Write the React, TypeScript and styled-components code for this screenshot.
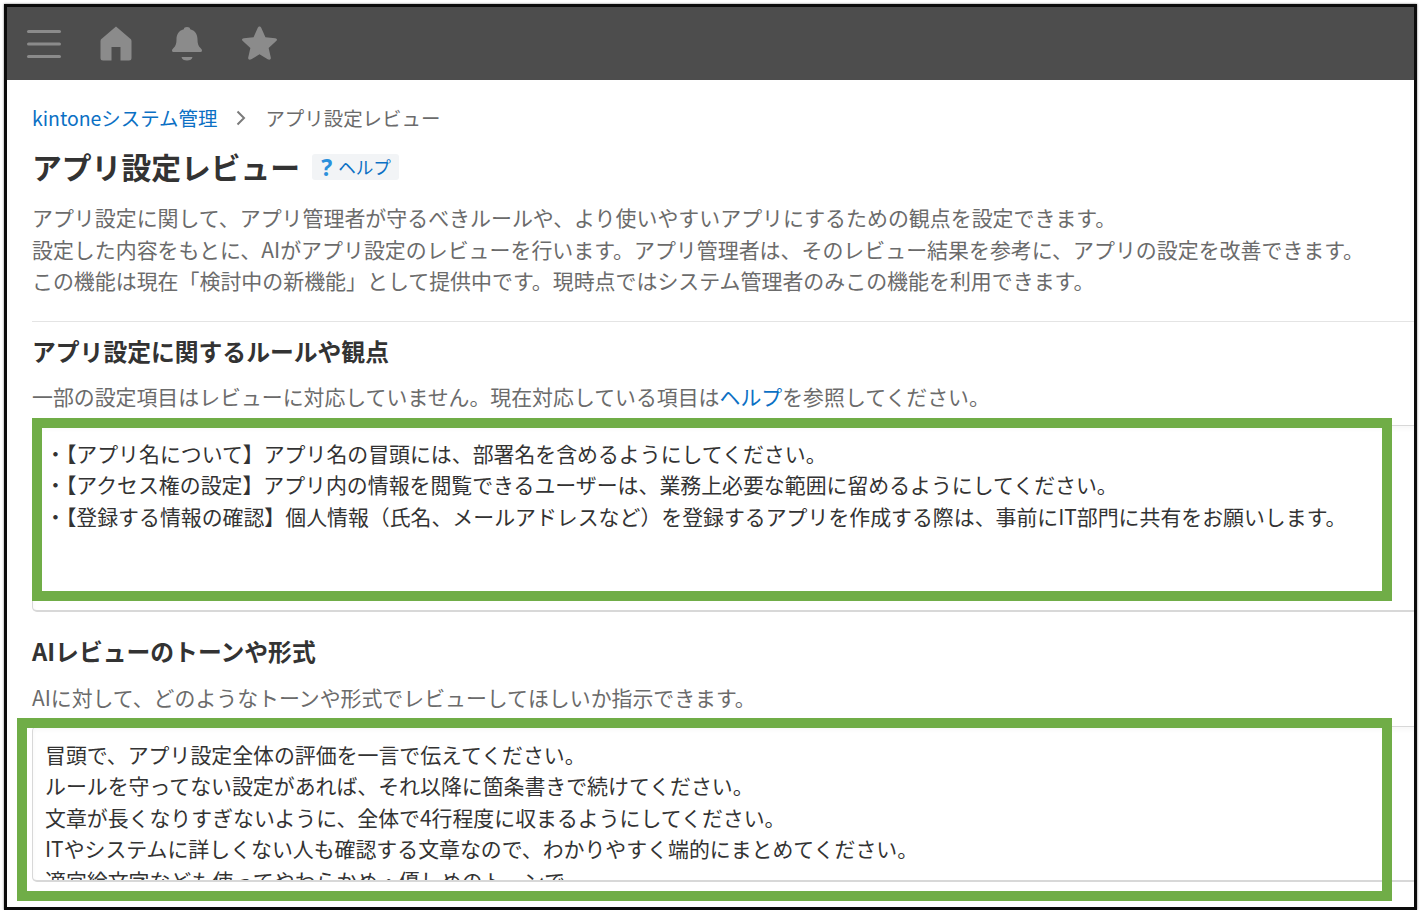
import * as React from "react";
import styled, { createGlobalStyle } from "styled-components";

const GlobalStyle = createGlobalStyle`
  html, body {
    margin: 0;
    padding: 0;
    background: #fff;
  }
  body {
    font-family: "Noto Sans CJK JP", "Noto Sans", sans-serif;
  }
`;

const Frame = styled.div`
  box-sizing: border-box;
  width: 1413px;
  height: 906px;
  margin: 4px 0 0 4px;
  border: 3px solid #0c0c0c;
  box-shadow: 0 0 2px #777;
  overflow: hidden;
  background: #fff;
`;

const Header = styled.header`
  display: flex;
  align-items: center;
  height: 73px;
  padding-left: 1px;
  background: #4d4d4d;
`;

const HeaderIcon = styled.div`
  display: flex;
  align-items: center;
  justify-content: center;
  width: 71.8px;
  height: 73px;

  svg {
    display: block;
    fill: #8b8b8b;
  }
`;

const Content = styled.main`
  padding: 0 0 0 25px;
`;

const Breadcrumb = styled.nav`
  display: flex;
  align-items: center;
  height: 32px;
  margin-top: 22px;
  font-size: 19.45px;
  line-height: 32px;
  color: #6b6b6b;
`;

const CrumbLink = styled.a`
  color: #0b70c4;
`;

const CrumbArrow = styled.svg`
  margin: 0 19px;
  fill: none;
  stroke: #7b7b7b;
  stroke-width: 2;
`;

const TitleRow = styled.div`
  display: flex;
  align-items: center;
  height: 42px;
  margin-top: 11px;
`;

const Title = styled.h1`
  margin: 0;
  font-size: 29.8px;
  line-height: 42px;
  font-weight: 700;
  color: #333;
`;

const HelpBadge = styled.a`
  display: flex;
  align-items: center;
  gap: 6px;
  height: 26px;
  margin: 2px 0 0 12px;
  padding: 0 8px 0 9px;
  border-radius: 3px;
  background: #f2f4f6;
  color: #0b70c4;
  font-size: 17.6px;
  line-height: 26px;
`;

const HelpMark = styled.span`
  color: #2b90dc;
  font-size: 23px;
  font-weight: 700;
  font-family: "Noto Sans", sans-serif;
`;

const Description = styled.p`
  margin: 15px 0 0;
  padding-bottom: 24px;
  border-bottom: 1px solid #e4e4e4;
  font-size: 20.95px;
  line-height: 31.5px;
  color: #6b6b6b;
`;

const SectionTitle = styled.h2<{ $top: number }>`
  margin: ${(p) => p.$top}px 0 0;
  font-size: 23.8px;
  line-height: 34px;
  font-weight: 700;
  color: #333;
`;

const Note = styled.p<{ $top: number }>`
  margin: ${(p) => p.$top}px 0 0;
  font-size: 20.9px;
  line-height: 32px;
  color: #6b6b6b;

  a {
    color: #0b70c4;
  }
`;

const FieldWrap = styled.div`
  position: relative;
  margin-top: 13px;
`;

const TextBox = styled.div<{ $height: number }>`
  box-sizing: border-box;
  height: ${(p) => p.$height}px;
  padding: 12px 12px 0;
  border: 1px solid #d8d8d8;
  border-right: none;
  border-bottom-width: 2px;
  border-radius: 5px 0 0 5px;
  box-shadow: inset 0 3px 4px rgba(0, 0, 0, 0.03);
  overflow: hidden;
  font-size: 20.9px;
  line-height: 31.5px;
  color: #333;
  white-space: nowrap;
`;

const Highlight = styled.div<{ $left: number; $top: number; $width: number; $height: number }>`
  position: absolute;
  box-sizing: border-box;
  left: ${(p) => p.$left}px;
  top: ${(p) => p.$top}px;
  width: ${(p) => p.$width}px;
  height: ${(p) => p.$height}px;
  border: 10px solid #70ad47;
  pointer-events: none;
`;

const rules = [
  "・【アプリ名について】アプリ名の冒頭には、部署名を含めるようにしてください。",
  "・【アクセス権の設定】アプリ内の情報を閲覧できるユーザーは、業務上必要な範囲に留めるようにしてください。",
  "・【登録する情報の確認】個人情報（氏名、メールアドレスなど）を登録するアプリを作成する際は、事前にIT部門に共有をお願いします。",
];

const tone = [
  "冒頭で、アプリ設定全体の評価を一言で伝えてください。",
  "ルールを守ってない設定があれば、それ以降に箇条書きで続けてください。",
  "文章が長くなりすぎないように、全体で4行程度に収まるようにしてください。",
  "ITやシステムに詳しくない人も確認する文章なので、わかりやすく端的にまとめてください。",
  "適宜絵文字なども使ってやわらかめ・優しめのトーンで",
];

export default function App() {
  return (
    <>
      <GlobalStyle />
      <Frame>
        <Header>
          <HeaderIcon>
            <svg width="36" height="30" viewBox="0 0 36 30">
              <rect x="1" y="1" width="34" height="3" rx="1.5" />
              <rect x="1" y="13.5" width="34" height="3" rx="1.5" />
              <rect x="1" y="26" width="34" height="3" rx="1.5" />
            </svg>
          </HeaderIcon>
          <HeaderIcon>
            <svg width="32" height="35" viewBox="0 0 32 35">
              <path d="M16 .5 30 12.500a3 3 0 0 1 1.500 2.600V32a2.500 2.500 0 0 1-2.500 2.500h-8.500V21h-9v13.500H3A2.500 2.500 0 0 1 .5 32V15.100A3 3 0 0 1 2 12.500Z" />
            </svg>
          </HeaderIcon>
          <HeaderIcon>
            <svg width="32" height="35" viewBox="0 0 32 35">
              <path d="M16 1c2 0 3 .9 3.200 2.200C24.800 4.600 26.500 9 26.500 13.500c0 4 .8 6.500 3 8.500.9.900 1.500 1.700 1.500 2.500 0 1-.8 1.500-2 1.500H3c-1.200 0-2-.5-2-1.500 0-.8.6-1.600 1.500-2.500 2.200-2 3-4.500 3-8.500C5.500 9 7.200 4.600 12.800 3.200 13 1.900 14 1 16 1Z" />
              <path d="M10.500 31h11c-.3 2.400-2.700 3.500-5.500 3.500s-5.200-1.100-5.500-3.500Z" />
            </svg>
          </HeaderIcon>
          <HeaderIcon>
            <svg width="35" height="35" viewBox="0 0 36 36">
              <path d="M18 .5c.9 0 1.500.6 2 1.700l4.100 9.300 10 1c1.200.1 1.900.7 1.900 1.500 0 .6-.4 1.200-1.100 1.800l-7.500 6.700 2.200 9.800c.3 1.300-.4 2.400-1.600 2.400-.5 0-1-.2-1.600-.5L18 29.100l-8.400 5.100c-.6.3-1.100.5-1.600.5-1.200 0-1.900-1.100-1.600-2.400l2.200-9.800-7.500-6.700C.4 15.200 0 14.600 0 14c0-.8.7-1.400 1.900-1.500l10-1L16 2.200c.5-1.100 1.100-1.700 2-1.700Z" />
            </svg>
          </HeaderIcon>
        </Header>
        <Content>
          <Breadcrumb>
            <CrumbLink>kintoneシステム管理</CrumbLink>
            <CrumbArrow width="10" height="16" viewBox="0 0 10 16">
              <path d="M1.500 1.500 8 8l-6.500 6.500" />
            </CrumbArrow>
            <span>アプリ設定レビュー</span>
          </Breadcrumb>
          <TitleRow>
            <Title>アプリ設定レビュー</Title>
            <HelpBadge>
              <HelpMark>?</HelpMark>ヘルプ
            </HelpBadge>
          </TitleRow>
          <Description>
            アプリ設定に関して、アプリ管理者が守るべきルールや、より使いやすいアプリにするための観点を設定できます。
            <br />
            設定した内容をもとに、AIがアプリ設定のレビューを行います。アプリ管理者は、そのレビュー結果を参考に、アプリの設定を改善できます。
            <br />
            この機能は現在「検討中の新機能」として提供中です。現時点ではシステム管理者のみこの機能を利用できます。
          </Description>
          <SectionTitle $top={12}>アプリ設定に関するルールや観点</SectionTitle>
          <Note $top={12}>
            一部の設定項目はレビューに対応していません。現在対応している項目は<a>ヘルプ</a>を参照してください。
          </Note>
          <FieldWrap>
            <TextBox $height={187}>
              {rules.map((line) => (
                <div key={line}>{line}</div>
              ))}
            </TextBox>
            <Highlight $left={0} $top={-7} $width={1360} $height={183} />
          </FieldWrap>
          <SectionTitle $top={22}>AIレビューのトーンや形式</SectionTitle>
          <Note $top={13}>AIに対して、どのようなトーンや形式でレビューしてほしいか指示できます。</Note>
          <FieldWrap>
            <TextBox $height={156}>
              {tone.map((line) => (
                <div key={line}>{line}</div>
              ))}
            </TextBox>
            <Highlight $left={-15} $top={-8} $width={1375} $height={183} />
          </FieldWrap>
        </Content>
      </Frame>
    </>
  );
}
